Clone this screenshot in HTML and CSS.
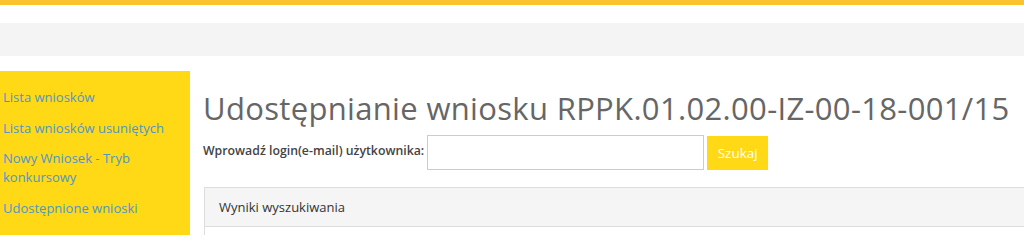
FILE: index.html
```html
<!DOCTYPE html>
<html lang="pl">
<head>
<meta charset="utf-8">
<title>Udostępnianie wniosku</title>
<link rel="stylesheet" href="styles.css">
</head>
<body>
<div class="topbar"></div>
<div class="navbar"></div>
<div class="layout">
  <aside class="sidebar">
    <ul class="menu">
      <li><a href="#">Lista wniosków</a></li>
      <li><a href="#">Lista wniosków usuniętych</a></li>
      <li><a href="#">Nowy Wniosek - Tryb konkursowy</a></li>
      <li><a href="#">Udostępnione wnioski</a></li>
    </ul>
  </aside>
  <main class="content">
    <h1 class="title">Udostępnianie wniosku RPPK.01.02.00-IZ-00-18-001/15</h1>
    <form class="search">
      <label class="search-label" for="login">Wprowadź login(e-mail) użytkownika:</label>
      <input class="search-input" id="login" type="text">
      <button class="search-btn" type="button">Szukaj</button>
    </form>
    <div class="panel">
      <div class="panel-heading">Wyniki wyszukiwania</div>
      <div class="panel-body"></div>
    </div>
  </main>
</div>
</body>
</html>
```

FILE: styles.css
```css
* { box-sizing: border-box; }
html, body { margin: 0; padding: 0; background: #fff; }
body {
  font-family: "Open Sans", "Noto Sans", sans-serif;
  font-size: 13px;
  color: #333;
  overflow: hidden;
}
.topbar {
  height: 5px;
  background: #fbc32c;
}
.navbar {
  height: 33px;
  margin-top: 18px;
  background: #f4f4f4;
}
.layout {
  display: flex;
  margin-top: 15px;
  height: 164px;
  overflow: hidden;
}
.sidebar {
  width: 190px;
  flex: none;
  background: #ffd816;
  padding: 12px 0 0 3px;
}
.menu {
  list-style: none;
  margin: 0;
  padding: 0;
  width: 165px;
}
.menu li {
  padding: 5px 0 6.5px;
  line-height: 19px;
}
.menu a {
  color: #4f97c8;
  text-decoration: none;
}
.content {
  flex: 1;
  padding-left: 13px;
}
.title {
  margin: 17px 0 0 0;
  font-size: 31px;
  letter-spacing: 0.33px;
  font-weight: 400;
  line-height: 40px;
  color: #666;
  white-space: nowrap;
}
.search {
  display: flex;
  align-items: center;
  margin-top: 7px;
}
.search-label {
  font-size: 12.3px;
  font-weight: 600;
  color: #444;
  margin-right: 3px;
  position: relative;
  top: -2px;
}
.search-input {
  width: 277px;
  height: 35px;
  border: 1px solid #ccc;
  background: #fff;
  margin: 0 3px 0 0;
  padding: 4px 8px;
}
.search-btn {
  width: 61px;
  height: 34px;
  border: 0;
  background: #ffd816;
  color: #fff;
  font-family: inherit;
  font-size: 13.5px;
  padding: 0;
}
.panel {
  margin-top: 17px;
  margin-left: 1px;
  border: 1px solid #ddd;
  border-right: 0;
}
.panel-heading {
  background: #f5f5f5;
  border-bottom: 1px solid #ddd;
  height: 39px;
  line-height: 38px;
  padding-left: 14px;
  color: #333;
}
.panel-body {
  height: 40px;
}
```
